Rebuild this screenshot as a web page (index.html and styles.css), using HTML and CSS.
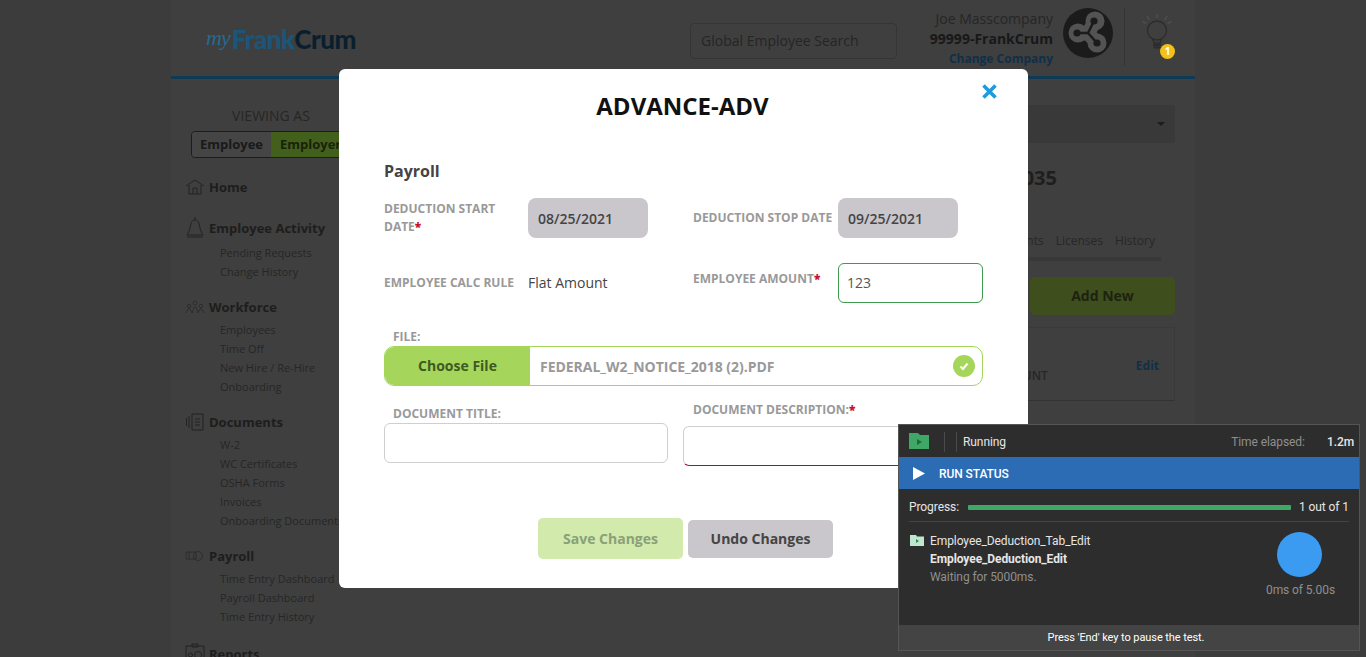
FILE: index.html
```html
<!DOCTYPE html>
<html>
<head lang="en">
    <meta charset="UTF-8">
    <title>myFrankCrum</title>
    <link rel="stylesheet" href="styles.css">
</head>
<body>
<div class="page">
    <header class="topbar">
        <div class="logo"><span class="logo-my">my</span><span class="logo-frank">Frank</span><span class="logo-crum">Crum</span></div>
        <div class="search">Global Employee Search</div>
        <div class="user">
            <div class="user-name">Joe Masscompany</div>
            <div class="user-co">99999-FrankCrum</div>
            <div class="user-link">Change Company</div>
        </div>
        <svg class="avatar" width="50" height="50" viewBox="0 0 50 50">
            <circle cx="25" cy="25" r="25" fill="#1b1b1b"/>
            <path d="M25 26L15 25M25 26L32 12M25 26L34 34" stroke="#535353" stroke-width="14"/>
            <circle cx="15" cy="25" r="9.5" fill="#535353"/>
            <circle cx="32" cy="13" r="9.5" fill="#535353"/>
            <circle cx="34" cy="35" r="9.5" fill="#535353"/>
            <path d="M14 25L25 25L31 13M25 25L34 35" stroke="#1b1b1b" stroke-width="2.5" fill="none"/>
            <circle cx="14" cy="25" r="3.6" fill="#1b1b1b"/>
            <circle cx="31" cy="13" r="3.6" fill="#1b1b1b"/>
            <circle cx="34" cy="35" r="3.6" fill="#1b1b1b"/>
        </svg>
        <div class="tips">
            <svg width="36" height="46" viewBox="0 0 36 46" fill="none" stroke="#2c2c2c">
                <circle cx="18" cy="19.500" r="9.500" stroke-width="1.300"/>
                <path d="M13.500 27.500L15 32H21L22.500 27.500" stroke-width="1.300"/>
                <path d="M14 34H22M14.500 36.500H21.500" stroke-width="2"/>
                <path d="M18 3V7M8 5L10.500 9M28 5L25.500 9M3.500 10.500L7.500 12.500M32.500 10.500L28.500 12.500" stroke="#4e4e4e" stroke-width="1.500"/>
            </svg>
            <span class="tips-badge">1</span>
        </div>
    </header>

    <div class="columns">
        <nav class="sidebar">
            <div class="viewing">VIEWING AS</div>
            <div class="toggle">
                <span class="toggle-off">Employee</span>
                <span class="toggle-on">Employer</span>
            </div>
            <div class="nav-group nav-home">
                <div class="nav-head">
                    <svg width="20" height="20" viewBox="0 0 20 20" fill="none" stroke="#232323" stroke-width="1"><path d="M1 9L10 3L19 9M4 8V17H16V8M8 17V11H12V17"/></svg>
                    Home
                </div>
            </div>
            <div class="nav-group">
                <div class="nav-head">
                    <svg width="20" height="24" viewBox="0 0 20 24" fill="none" stroke="#232323" stroke-width="1"><path d="M10 1V4M10 4C6 4 6 8 5 12C4.500 15 3 17 2 19H18C17 17 15.500 15 15 12C14 8 14 4 10 4ZM2 21H18"/></svg>
                    Employee Activity
                </div>
                <ul class="nav-sub nav-sub-wide">
                    <li>Pending Requests</li>
                    <li>Change History</li>
                </ul>
            </div>
            <div class="nav-group">
                <div class="nav-head">
                    <svg width="20" height="14" viewBox="0 0 20 14" fill="none" stroke="#2a2a2a" stroke-width="0.800"><circle cx="10" cy="3" r="2"/><circle cx="4" cy="6" r="1.700"/><circle cx="16" cy="6" r="1.700"/><path d="M1 13L3 9H5L7 13M7 13L9 7H11L13 13M13 13L15 9H17L19 13"/></svg>
                    Workforce
                </div>
                <ul class="nav-sub">
                    <li>Employees</li>
                    <li>Time Off</li>
                    <li>New Hire / Re-Hire</li>
                    <li>Onboarding</li>
                </ul>
            </div>
            <div class="nav-group">
                <div class="nav-head">
                    <svg width="20" height="20" viewBox="0 0 20 20" fill="none" stroke="#232323" stroke-width="1"><path d="M7 2H18V18H7ZM4 4V16M1.500 6V14M10 7H15M10 10H15M10 13H15"/></svg>
                    Documents
                </div>
                <ul class="nav-sub">
                    <li>W-2</li>
                    <li>WC Certificates</li>
                    <li>OSHA Forms</li>
                    <li>Invoices</li>
                    <li>Onboarding Documents</li>
                </ul>
            </div>
            <div class="nav-group nav-last">
                <div class="nav-head">
                    <svg width="20" height="12" viewBox="0 0 20 12" fill="none" stroke="#2a2a2a" stroke-width="0.800"><path d="M1 2H11V9H1ZM4 2V9"/><circle cx="13" cy="6" r="4.500"/></svg>
                    Payroll
                </div>
                <ul class="nav-sub">
                    <li>Time Entry Dashboard</li>
                    <li>Payroll Dashboard</li>
                    <li>Time Entry History</li>
                </ul>
            </div>
            <div class="nav-group">
                <div class="nav-head">
                    <svg width="20" height="22" viewBox="0 0 20 22" fill="none" stroke="#232323" stroke-width="1"><path d="M1 3H19V21H1ZM7 1H13V4H7Z"/><circle cx="5.500" cy="12" r="2"/><circle cx="13" cy="12" r="3.500"/></svg>
                    Reports
                </div>
            </div>
        </nav>

        <main class="main">
            <div class="select"><span class="caret"></span></div>
            <div class="emp-title">100035</div>
            <div class="tabs">
                <span>Documents</span>
                <span>Licenses</span>
                <span>History</span>
            </div>
            <div class="add-new">Add New</div>
            <div class="list-box">
                <span class="list-col">AMOUNT</span>
                <span class="list-edit">Edit</span>
            </div>
        </main>
    </div>
</div>

<div class="modal">
    <h1 class="modal-title">ADVANCE-ADV</h1>
    <svg class="modal-close" width="17" height="17" viewBox="0 0 17 17"><path d="M2.500 2.500L14.500 14.500M14.500 2.500L2.500 14.500" stroke="#1e9ade" stroke-width="3.600"/></svg>
    <h2 class="section">Payroll</h2>

    <div class="form-row">
        <div class="field">
            <label class="lbl lbl-first">DEDUCTION START DATE<b>*</b></label>
            <div class="date">08/25/2021</div>
        </div>
        <div class="field field-right">
            <label class="lbl">DEDUCTION STOP DATE</label>
            <div class="date">09/25/2021</div>
        </div>
    </div>

    <div class="form-row form-row2">
        <div class="field">
            <label class="lbl lbl-first lbl-calc">EMPLOYEE CALC RULE</label>
            <div class="plain">Flat Amount</div>
        </div>
        <div class="field field-right field-top">
            <label class="lbl lbl-amount">EMPLOYEE AMOUNT<b>*</b></label>
            <div class="amount">123</div>
        </div>
    </div>

    <label class="lbl lbl-file">FILE:</label>
    <div class="file">
        <div class="file-btn">Choose File</div>
        <div class="file-name">FEDERAL_W2_NOTICE_2018 (2).PDF</div>
        <svg class="file-ok" width="22" height="22" viewBox="0 0 22 22"><circle cx="11" cy="11" r="11" fill="#a5d65b"/><path d="M7.500 11.500L10 14L14.500 8.500" stroke="#fff" stroke-width="2" fill="none"/></svg>
    </div>

    <div class="doc-row">
        <div class="doc-title">
            <label class="lbl lbl-doc">DOCUMENT TITLE:</label>
            <div class="text-input"></div>
        </div>
        <div class="doc-desc">
            <label class="lbl lbl-desc">DOCUMENT DESCRIPTION:<b>*</b></label>
            <div class="text-input text-input-bad"></div>
        </div>
    </div>

    <div class="actions">
        <div class="btn btn-save">Save Changes</div>
        <div class="btn btn-undo">Undo Changes</div>
    </div>
</div>

<div class="runner">
    <div class="run-top">
        <svg width="20" height="16" viewBox="0 0 20 16"><path d="M0 0H9L11 2H20V16H0Z" fill="#3fa866"/><path d="M8 6L13 9L8 12Z" fill="#24673f"/></svg>
        <span class="run-sep run-sep-first"></span>
        <span class="run-sep"></span>
        <span class="run-state">Running</span>
        <span class="run-time">Time elapsed:</span>
        <span class="run-val">1.2m</span>
    </div>
    <div class="run-bar">
        <svg width="12" height="13" viewBox="0 0 12 13"><path d="M0 0L12 6.500L0 13Z" fill="#fff"/></svg>
        RUN STATUS
    </div>
    <div class="run-progress">
        <span>Progress:</span>
        <div class="run-track"></div>
        <span>1 out of 1</span>
    </div>
    <div class="run-body">
        <svg class="run-folder" width="14" height="11" viewBox="0 0 14 11"><path d="M0 0H6L7 1.500H14V11H0Z" fill="#bfe6cf"/><path d="M6 4L9 6L6 8Z" fill="#2e8a55"/></svg>
        <div class="run-text">
            <div>Employee_Deduction_Tab_Edit</div>
            <div class="run-step">Employee_Deduction_Edit</div>
            <div class="run-wait">Waiting for 5000ms.</div>
        </div>
        <div class="run-timer">
            <div class="run-dot"></div>
            <div class="run-ms">0ms of 5.00s</div>
        </div>
    </div>
    <div class="run-foot">Press 'End' key to pause the test.</div>
</div>
</body>
</html>
```

FILE: styles.css
```css
*{
    margin: 0;
    padding: 0;
    box-sizing: border-box;
}
ul{
    list-style: none;
}
html,body{
    height: 657px;
    overflow: hidden;
}
body{
    background: #3c3c3c;
    font-family: "Open Sans", "Liberation Sans", sans-serif;
    color: #222222;
}

/* page behind the dialog */
.page{
    width: 1024px;
    height: 657px;
    margin: 0 auto;
    background: #3f3f3f;
}
.topbar{
    height: 79px;
    border-bottom: 3px solid #0e3a55;
    display: flex;
    align-items: flex-start;
}
.logo{
    width: 519px;
    padding: 24px 0 0 35px;
    font-family: Lato, "Open Sans", sans-serif;
    font-weight: 900;
    font-size: 26px;
    line-height: 28px;
    letter-spacing: -0.5px;
    white-space: nowrap;
}
.logo-my{
    display: inline-block;
    font-family: "Liberation Serif", serif;
    font-style: italic;
    font-weight: 400;
    font-size: 22px;
    letter-spacing: -1px;
    color: #256a92;
    margin-right: 2px;
    vertical-align: 4px;
}
.logo-frank{
    color: #1a567a;
}
.logo-crum{
    color: #0a1f2e;
}
.search{
    width: 207px;
    height: 36px;
    margin-top: 23px;
    padding-left: 10px;
    border: 1px solid #353535;
    border-radius: 4px;
    font-size: 14px;
    line-height: 34px;
    color: #252525;
}
.user{
    width: 156px;
    padding-top: 9px;
    text-align: right;
    white-space: nowrap;
}
.user-name{
    font-size: 14px;
    line-height: 20px;
    color: #262626;
}
.user-co{
    font-size: 14px;
    line-height: 20px;
    font-weight: 700;
    color: #181818;
}
.user-link{
    margin-top: 1px;
    font-size: 12px;
    line-height: 18px;
    font-weight: 700;
    color: #103048;
}
.avatar{
    margin: 8px 0 0 10px;
}
.tips{
    width: 52px;
    height: 58px;
    margin: 8px 0 0 11px;
    padding: 3px 0 0 14px;
    border-left: 1px solid #333333;
    position: relative;
}
.tips-badge{
    position: absolute;
    left: 35px;
    top: 36px;
    width: 15px;
    height: 15px;
    border-radius: 50%;
    background: #f2c21a;
    color: #ffffff;
    font-size: 10px;
    font-weight: 700;
    line-height: 15px;
    text-align: center;
}
.columns{
    display: flex;
}

.sidebar{
    width: 199px;
    flex: none;
    padding: 27px 0 0 15px;
}
.viewing{
    width: 170px;
    font-size: 14px;
    line-height: 20px;
    text-align: center;
    color: #262626;
}
.toggle{
    display: flex;
    width: 170px;
    height: 27px;
    margin: 5px 0 0 5px;
    border: 1px solid #1d1d1d;
    border-radius: 4px;
    overflow: hidden;
    font-size: 13px;
    font-weight: 700;
    line-height: 25px;
    white-space: nowrap;
}
.toggle-off{
    width: 79px;
    flex: none;
    background: #454545;
    text-align: center;
    color: #191919;
}
.toggle-on{
    flex: 1;
    padding-left: 9px;
    background: #42601c;
    color: #18220b;
}
.nav-group{
    margin-bottom: 16px;
}
.nav-home{
    margin-top: 19px;
    margin-bottom: 21px;
}
.nav-last{
    margin-bottom: 18px;
}
.nav-head{
    position: relative;
    height: 20px;
    padding-left: 23px;
    font-size: 13px;
    font-weight: 700;
    line-height: 20px;
    color: #1d1d1d;
    white-space: nowrap;
}
.nav-head svg{
    position: absolute;
    left: -1px;
    top: 50%;
    transform: translateY(-50%);
}
.nav-sub{
    padding: 3px 0 0 34px;
    font-size: 11px;
    line-height: 19px;
    color: #262626;
    white-space: nowrap;
}
.nav-sub-wide{
    padding-top: 5px;
}

.main{
    flex: 1;
    padding: 26px 20px 0 20px;
    display: flex;
    flex-direction: column;
    align-items: flex-end;
}
.select{
    width: 785px;
    height: 38px;
    background: #393939;
    border-radius: 3px;
    display: flex;
    justify-content: flex-end;
    align-items: center;
    padding-right: 10px;
}
.caret{
    border-top: 4px solid #1d1d1d;
    border-left: 4px solid transparent;
    border-right: 4px solid transparent;
}
.emp-title{
    margin: 21px 118px 0 0;
    font-size: 20px;
    line-height: 28px;
    font-weight: 700;
    color: #1e1e1e;
}
.tabs{
    display: flex;
    justify-content: flex-end;
    gap: 12px;
    width: 771px;
    margin: 39px 14px 0 0;
    padding: 0 6px 6px 0;
    border-bottom: 4px solid #383838;
    font-size: 12px;
    line-height: 20px;
    color: #272727;
}
.add-new{
    width: 145px;
    height: 38px;
    margin-top: 16px;
    background: #3f4e1d;
    border-radius: 5px;
    font-size: 14px;
    font-weight: 700;
    line-height: 38px;
    text-align: center;
    color: #1c2310;
}
.list-box{
    width: 785px;
    height: 74px;
    margin-top: 12px;
    padding-right: 15px;
    border: 1px solid #3a3a3a;
    border-bottom-color: #333333;
    display: flex;
    justify-content: flex-end;
    gap: 88px;
    font-size: 12px;
    font-weight: 600;
    line-height: 16px;
}
.list-col{
    margin-top: 40px;
    color: #262626;
}
.list-edit{
    margin-top: 30px;
    font-weight: 700;
    color: #103048;
}

/* dialog */
.modal{
    position: absolute;
    left: 339px;
    top: 69px;
    width: 689px;
    height: 519px;
    padding: 21px 45px 0 45px;
    background: #ffffff;
    border-radius: 6px;
}
.modal-title{
    padding-right: 2px;
    font-size: 24px;
    line-height: 32px;
    font-weight: 700;
    text-align: center;
    color: #111111;
}
.modal-close{
    position: absolute;
    left: 642px;
    top: 14px;
}
.section{
    margin-top: 38px;
    font-size: 16px;
    line-height: 22px;
    font-weight: 700;
    color: #444444;
}
.form-row{
    display: flex;
    margin-top: 16px;
    height: 40px;
}
.form-row2{
    margin-top: 25px;
}
.field{
    display: flex;
    align-items: center;
    width: 309px;
    flex: none;
}
.field-right{
    width: 290px;
}
.lbl{
    display: block;
    font-size: 12px;
    line-height: 18px;
    font-weight: 700;
    color: #999999;
}
.lbl b{
    color: #c8102e;
}
.field .lbl{
    width: 145px;
    flex: none;
}
.field .lbl-first{
    width: 144px;
    padding-right: 20px;
}
.field .lbl-calc{
    padding-right: 0;
    white-space: nowrap;
}
.date{
    width: 120px;
    height: 40px;
    padding-left: 10px;
    background: #c9c6cc;
    border-radius: 8px;
    font-size: 14px;
    font-weight: 600;
    line-height: 42px;
    color: #444444;
}
.plain{
    margin-top: -2px;
    font-size: 14px;
    color: #444444;
}
.field-top{
    align-items: flex-start;
}
.field .lbl-amount{
    margin-top: 7px;
}
.amount{
    width: 145px;
    height: 40px;
    padding-left: 8px;
    border: 1px solid #3d9a4f;
    border-radius: 6px;
    font-size: 14px;
    line-height: 38px;
    color: #555555;
}
.lbl-file{
    margin: 25px 0 0 9px;
}
.file{
    display: flex;
    align-items: center;
    height: 40px;
    border: 1px solid #a5d65b;
    border-radius: 10px;
    overflow: hidden;
}
.file-btn{
    width: 145px;
    height: 40px;
    flex: none;
    background: #a5d65b;
    font-size: 14px;
    font-weight: 700;
    line-height: 40px;
    text-align: center;
    color: #3e5a22;
}
.file-name{
    flex: 1;
    padding-left: 10px;
    font-size: 14px;
    font-weight: 700;
    letter-spacing: -0.03px;
    color: #999999;
}
.file-ok{
    margin-right: 7px;
}
.doc-row{
    display: flex;
    margin-top: 15px;
}
.doc-title{
    width: 284px;
    flex: none;
    padding-top: 4px;
}
.doc-desc{
    width: 300px;
    flex: none;
    margin-left: 15px;
}
.lbl-doc{
    margin-left: 9px;
}
.lbl-desc{
    margin-left: 10px;
    margin-bottom: 7px;
}
.text-input{
    height: 40px;
    border: 1px solid #cfcfcf;
    border-radius: 6px;
}
.text-input-bad{
    border-bottom: 1px solid #a8102e;
}
.actions{
    display: flex;
    align-items: center;
    gap: 5px;
    margin-top: 52px;
    padding-left: 154px;
}
.btn{
    width: 145px;
    border-radius: 5px;
    font-size: 14px;
    font-weight: 700;
    text-align: center;
}
.btn-save{
    height: 41px;
    line-height: 41px;
    background: #d2eaab;
    color: #8aa07a;
}
.btn-undo{
    height: 38px;
    line-height: 38px;
    background: #c9c6cc;
    color: #444444;
}

/* test runner panel */
.runner{
    position: absolute;
    left: 898px;
    top: 424px;
    width: 462px;
    height: 227px;
    display: flex;
    flex-direction: column;
    background: #2d2d2d;
    border: 1px solid #555555;
    font-family: Roboto, "Noto Sans", sans-serif;
    font-size: 12px;
    letter-spacing: -0.08px;
    color: #e6e6e6;
}
.run-top{
    display: flex;
    align-items: center;
    height: 32px;
    flex: none;
    padding: 2px 5px 0 10px;
}
.run-top svg{
    margin-top: -2px;
}
.run-sep{
    width: 1px;
    height: 20px;
    margin-left: 11px;
    background: #4a4a4a;
}
.run-sep-first{
    margin-left: 15px;
}
.run-state{
    margin-left: 6px;
    flex: 1;
}
.run-time{
    color: #8f8f8f;
}
.run-val{
    margin-left: 22px;
    font-weight: 500;
}
.run-bar{
    display: flex;
    align-items: center;
    gap: 14px;
    height: 32px;
    flex: none;
    padding: 2px 0 0 14px;
    background: #2b6cb5;
    color: #ffffff;
    font-weight: 500;
}
.run-bar svg{
    margin-top: -2px;
}
.run-progress{
    display: flex;
    align-items: center;
    height: 33px;
    flex: none;
    margin: 0 10px;
    padding-top: 4px;
    border-bottom: 1px solid #444444;
}
.run-track{
    flex: 1;
    height: 5px;
    margin: 0 8px 0 9px;
    background: #3fa866;
    border-radius: 1px;
}
.run-body{
    flex: 1;
    display: flex;
    padding: 10px 10px 0 11px;
}
.run-folder{
    margin: 3px 6px 0 0;
}
.run-text{
    flex: 1;
    line-height: 18px;
}
.run-step{
    font-weight: 700;
}
.run-wait{
    color: #8f8f8f;
}
.run-timer{
    width: 100px;
    text-align: center;
}
.run-dot{
    width: 45px;
    height: 45px;
    margin: 0 auto;
    border-radius: 50%;
    background: #3a9bf0;
}
.run-ms{
    margin-top: 6px;
    padding-left: 3px;
    color: #8f8f8f;
}
.run-foot{
    height: 25px;
    flex: none;
    padding-right: 6px;
    background: #444444;
    font-size: 11px;
    line-height: 26px;
    text-align: center;
    color: #ffffff;
}
```
